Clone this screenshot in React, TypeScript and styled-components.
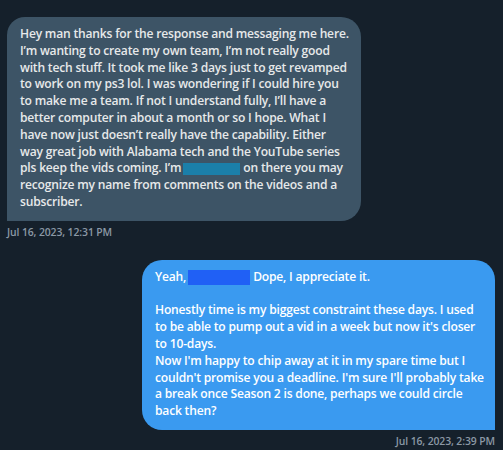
import React from 'react'
import styled, { createGlobalStyle } from 'styled-components'

const GlobalStyle = createGlobalStyle`
  html, body {
    margin: 0;
    padding: 0;
    background: #15202b;
  }
  body {
    font-family: "Open Sans", "Noto Sans", "Liberation Sans", sans-serif;
  }
`

const Thread = styled.div`
  width: 503px;
  height: 450px;
  box-sizing: border-box;
  padding: 17px 8px 0 7px;
  display: flex;
  flex-direction: column;
  background: #15202b;
  overflow: hidden;
`

const Group = styled.div<{ $mine?: boolean }>`
  display: flex;
  flex-direction: column;
  align-items: ${(p) => (p.$mine ? 'flex-end' : 'flex-start')};
  margin-bottom: ${(p) => (p.$mine ? '0' : '20px')};
`

const Bubble = styled.div<{ $mine?: boolean }>`
  width: ${(p) => (p.$mine ? '353px' : '354px')};
  box-sizing: border-box;
  padding: 9px 10px 10px 13px;
  font-size: 12.1px;
  line-height: 16.8px;
  letter-spacing: -0.2px;
  font-weight: 600;
  color: ${(p) => (p.$mine ? '#ffffff' : '#e7e9ea')};
  background: ${(p) => (p.$mine ? '#3a9af0' : '#3d5466')};
  border-radius: ${(p) => (p.$mine ? '20px 20px 0 20px' : '18px 20px 20px 0')};
`

const Para = styled.p`
  margin: 0;
`

const Gap = styled.div`
  height: 16.8px;
`

const Redacted = styled.span<{ $tone: string; $w: number; $h: number }>`
  display: inline-block;
  width: ${(p) => p.$w}px;
  height: ${(p) => p.$h}px;
  background: ${(p) => p.$tone};
  vertical-align: middle;
  margin: 0 3px 0 2px;
`

const Stamp = styled.div`
  margin-top: 4px;
  font-size: 10.4px;
  line-height: 15px;
  letter-spacing: -0.1px;
  color: #8b98a5;
  font-weight: 600;
`

export default function App() {
  return (
    <Thread>
      <GlobalStyle />
      <Group>
        <Bubble>
          <Para>
            Hey man thanks for the response and messaging me here. I’m wanting
            to create my own team, I’m not really good with tech stuff. It took
            me like 3 days just to get revamped to work on my ps3 lol. I was
            wondering if I could hire you to make me a team. If not I understand
            fully, I’ll have a better computer in about a month or so I hope.
            What I have now just doesn’t really have the capability. Either way
            great job with Alabama tech and the YouTube series pls keep the vids
            coming. I’m
            <Redacted $tone="#1b7fa9" $w={57} $h={12} />
            on there you may recognize my name from comments on the videos and
            a subscriber.
          </Para>
        </Bubble>
        <Stamp>Jul 16, 2023, 12:31 PM</Stamp>
      </Group>
      <Group $mine>
        <Bubble $mine>
          <Para>
            Yeah,
            <Redacted $tone="#2060f5" $w={62} $h={15} />
            Dope, I appreciate it.
          </Para>
          <Gap />
          <Para>
            Honestly time is my biggest constraint these days. I used to be able
            to pump out a vid in a week but now it's closer to 10-days.
          </Para>
          <Para>
            Now I'm happy to chip away at it in my spare time but I couldn't
            promise you a deadline. I'm sure I'll probably take a break once
            Season 2 is done, perhaps we could circle back then?
          </Para>
        </Bubble>
        <Stamp>Jul 16, 2023, 2:39 PM</Stamp>
      </Group>
    </Thread>
  )
}
